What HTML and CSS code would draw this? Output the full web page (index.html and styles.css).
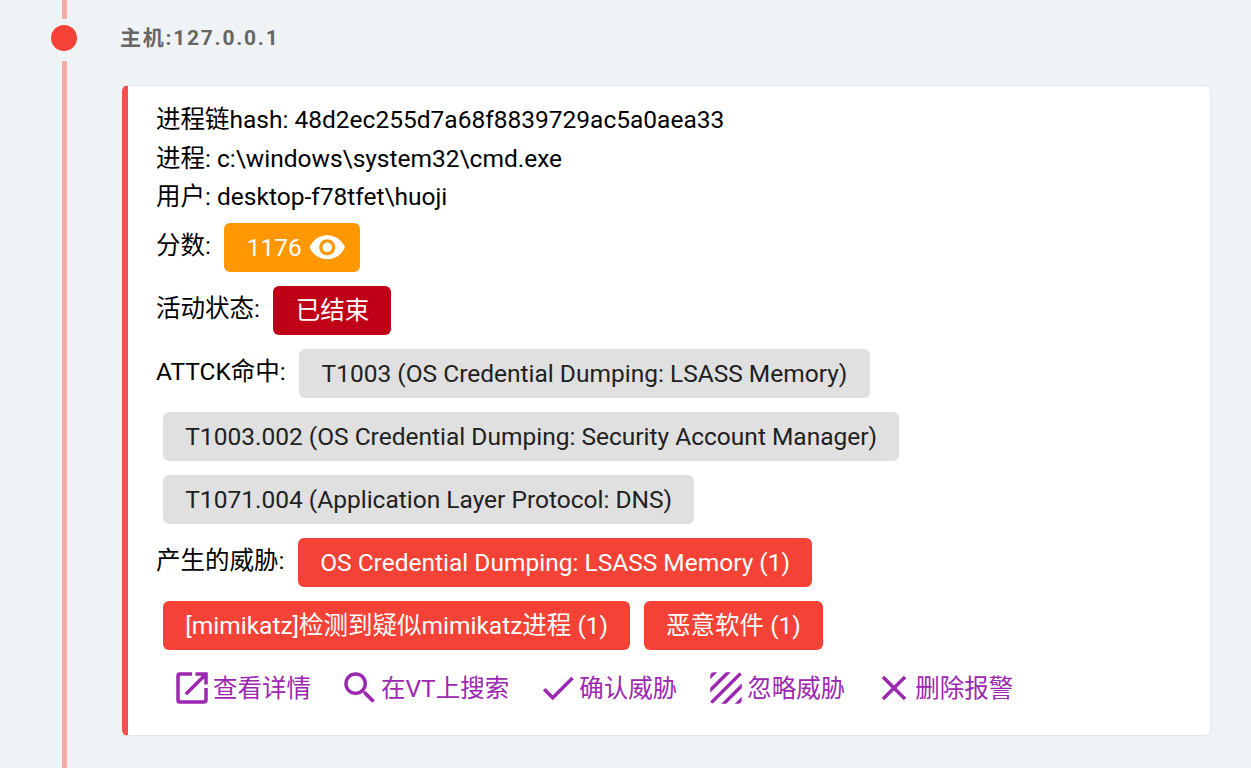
FILE: index.html
```html
<!DOCTYPE html>
<html lang="zh">
<head>
<meta charset="utf-8">
<title>主机</title>
<link rel="stylesheet" href="styles.css">
</head>
<body>
<div class="timeline">
  <div class="rail">
    <div class="line line-top"></div>
    <div class="dot"></div>
    <div class="line line-bottom"></div>
  </div>
  <div class="content">
    <div class="host">主机:127.0.0.1</div>
    <div class="card">
      <div class="row">进程链hash: 48d2ec255d7a68f8839729ac5a0aea33</div>
      <div class="row">进程: c:\windows\system32\cmd.exe</div>
      <div class="row">用户: desktop-f78tfet\huoji</div>
      <div class="chips first">
        <span class="label">分数:</span>
        <span class="chip orange">1176
          <svg class="eye" viewBox="0 0 24 24"><path fill="#fff" d="M12 4.5C7 4.5 2.73 7.61 1 12c1.73 4.39 6 7.5 11 7.5s9.27-3.11 11-7.5c-1.73-4.39-6-7.5-11-7.5zM12 17c-2.76 0-5-2.24-5-5s2.24-5 5-5 5 2.24 5 5-2.24 5-5 5zm0-8c-1.66 0-3 1.34-3 3s1.34 3 3 3 3-1.34 3-3-1.34-3-3-3z"/></svg>
        </span>
      </div>
      <div class="chips">
        <span class="label">活动状态:</span>
        <span class="chip darkred">已结束</span>
      </div>
      <div class="chips">
        <span class="label">ATTCK命中:</span>
        <span class="chip grey">T1003 (OS Credential Dumping: LSASS Memory)</span>
      </div>
      <div class="chips indent"><span class="chip grey">T1003.002 (OS Credential Dumping: Security Account Manager)</span></div>
      <div class="chips indent"><span class="chip grey">T1071.004 (Application Layer Protocol: DNS)</span></div>
      <div class="chips">
        <span class="label">产生的威胁:</span>
        <span class="chip red">OS Credential Dumping: LSASS Memory (1)</span>
      </div>
      <div class="chips indent">
        <span class="chip red">[mimikatz]检测到疑似mimikatz进程 (1)</span>
        <span class="chip red">恶意软件 (1)</span>
      </div>
      <div class="actions">
        <a class="action"><svg viewBox="0 0 24 24"><path d="M19 19H5V5h7V3H5a2 2 0 0 0-2 2v14a2 2 0 0 0 2 2h14c1.1 0 2-.9 2-2v-7h-2v7zM14 3v2h3.59l-9.83 9.83 1.41 1.41L19 6.41V10h2V3h-7z"/></svg>查看详情</a>
        <a class="action"><svg viewBox="0 0 24 24"><path d="M15.5 14h-.79l-.28-.27A6.47 6.47 0 0 0 16 9.5 6.5 6.5 0 1 0 9.5 16c1.61 0 3.09-.59 4.23-1.57l.27.28v.79l5 4.99L20.49 19l-4.99-5zm-6 0C7.01 14 5 11.99 5 9.5S7.01 5 9.5 5 14 7.01 14 9.5 11.99 14 9.5 14z"/></svg>在VT上搜索</a>
        <a class="action"><svg viewBox="0 0 24 24"><path d="M9 16.17 4.83 12l-1.42 1.41L9 19 21 7l-1.41-1.41z"/></svg>确认威胁</a>
        <a class="action"><svg viewBox="0 0 24 24"><path d="M19.51 3.08 3.08 19.51c.09.34.27.65.51.9.25.24.56.42.9.51L20.93 4.49c-.19-.69-.73-1.23-1.42-1.41zM11.88 3 3 11.88v2.83L14.71 3h-2.83zM5 3c-1.1 0-2 .9-2 2v2l4-4H5zm14 18c.55 0 1.05-.22 1.41-.59.37-.36.59-.86.59-1.41v-2l-4 4h2zm-9.71 0h2.83L21 12.12V9.29L9.29 21z"/></svg>忽略威胁</a>
        <a class="action"><svg viewBox="0 0 24 24"><path d="M19 6.41 17.59 5 12 10.59 6.41 5 5 6.41 10.59 12 5 17.59 6.41 19 12 13.41 17.59 19 19 17.59 13.41 12z"/></svg>删除报警</a>
      </div>
    </div>
  </div>
</div>
</body>
</html>
```

FILE: styles.css
```css
* { box-sizing: border-box; }
html, body { margin: 0; height: 100%; }
body {
  background: #eff3f6;
  font-family: Roboto, "Noto Sans CJK SC", sans-serif;
  color: #000;
  overflow: hidden;
}
.timeline { display: flex; height: 768px; padding-left: 51px; }
.rail { width: 26px; display: flex; flex-direction: column; align-items: center; flex: none; }
.line { width: 5px; background: #f2aeab; }
.line-top { height: 19px; }
.line-bottom { flex: 1; }
.dot { width: 26px; height: 26px; border-radius: 50%; background: #f44336; margin: 6px 0 10px; flex: none; }
.content { margin-left: 45px; width: 1089px; }
.host { font-size: 21px; font-weight: 700; color: #666; letter-spacing: 1.75px; height: 85px; padding-top: 25px; margin-left: -2px; line-height: 26px; }
.card {
  background: #fff;
  border: 1px solid #e3e6ea;
  border-left: 6px solid #ef5350;
  border-radius: 6px;
  height: 651px;
  padding: 15px 0 0 28px;
  font-size: 24.5px;
}
.row { height: 38.5px; line-height: 38.5px; }
.chips { display: flex; align-items: center; gap: 13.5px; height: 49px; margin-bottom: 14px; }
.chips.first { margin-top: 6.5px; }
.indent { padding-left: 7px; }
.label { line-height: 1; position: relative; top: -1px; }
.chip { height: 49px; display: inline-flex; align-items: center; gap: 6.5px; padding: 1px 22.25px 0; border-radius: 6px; font-size: 24.5px; line-height: 1; white-space: nowrap; }
.orange { background: #ff9800; color: #fff; }
.darkred { background: #c00017; color: #fff; }
.grey { background: #e0e0e0; color: #212121; }
.red { background: #f44336; color: #fff; }
.eye { width: 38.5px; height: 38.5px; margin-top: -1px; margin-right: -8.75px; }
.actions { display: flex; gap: 28px; padding-left: 15px; color: #9c27b0; font-size: 24.5px; line-height: 1; }
.action { display: inline-flex; align-items: center; height: 48px; padding-top: 2px; }
.action svg { width: 42px; height: 42px; margin-top: -2px; fill: #9c27b0; }
```
